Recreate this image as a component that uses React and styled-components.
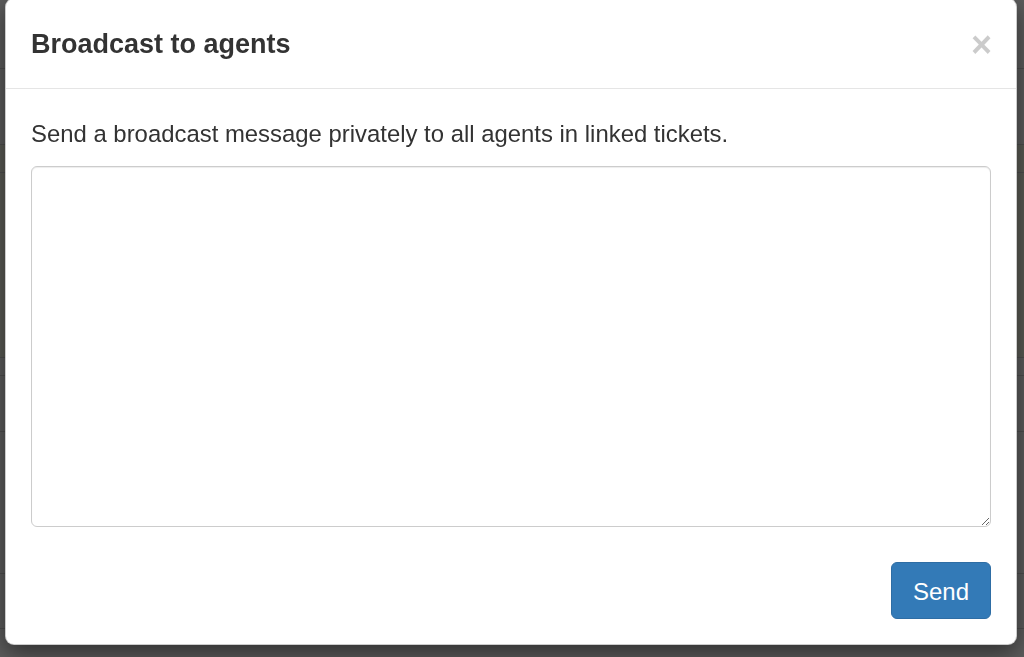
import React from "react";
import styled, { createGlobalStyle } from "styled-components";

const GlobalStyle = createGlobalStyle`
  html, body {
    margin: 0;
    padding: 0;
    height: 100%;
    overflow: hidden;
    background: #ffffff;
  }

  body {
    font-family: "Liberation Sans", Arial, sans-serif;
    color: #333333;
  }

  * {
    box-sizing: border-box;
  }
`;

const Page = styled.div`
  display: flex;
  flex-direction: column;
  height: 100vh;
`;

const Row = styled.div`
  height: ${(p) => p.h}px;
  flex-shrink: 0;
  border-bottom: 1px solid #d8d8d8;
  background: ${(p) => (p.tint ? "#f9fbe9" : "#ffffff")};
`;

const Backdrop = styled.div`
  position: fixed;
  inset: 0;
  background: rgba(0, 0, 0, 0.64);
`;

const Modal = styled.div`
  position: fixed;
  top: -2px;
  left: 5px;
  width: 1012px;
  display: flex;
  flex-direction: column;
  background: #ffffff;
  border: 1px solid rgba(0, 0, 0, 0.2);
  border-radius: 9px;
  box-shadow: 0 8px 25px rgba(0, 0, 0, 0.5);
`;

const Header = styled.div`
  display: flex;
  align-items: center;
  justify-content: space-between;
  height: 90px;
  padding: 2px 25px 0 25px;
  border-bottom: 1px solid #e5e5e5;
`;

const Title = styled.h4`
  margin: 0;
  font-size: 27px;
  font-weight: 700;
  line-height: 1.1;
  color: #333333;
`;

const Close = styled.button`
  padding: 0;
  margin: 0 -1px 0 0;
  border: 0;
  background: transparent;
  font-family: "Liberation Sans", Arial, sans-serif;
  font-size: 36px;
  font-weight: 700;
  line-height: 1;
  color: #000000;
  opacity: 0.2;
  cursor: pointer;
`;

const Body = styled.div`
  display: flex;
  flex-direction: column;
  gap: 15px;
  padding: 28px 25px 10px;
`;

const Lead = styled.p`
  margin: 0;
  font-size: 23.9px;
  line-height: 33.6px;
  color: #333333;
`;

const Message = styled.textarea`
  display: block;
  width: 100%;
  height: 361px;
  padding: 10px 20px;
  border: 1px solid #cccccc;
  border-radius: 6px;
  box-shadow: inset 0 1px 1px rgba(0, 0, 0, 0.075);
  font-family: inherit;
  font-size: 23.5px;
  color: #555555;
  resize: vertical;
  outline: none;
`;

const Footer = styled.div`
  display: flex;
  justify-content: flex-end;
  padding: 25px;
`;

const Button = styled.button`
  height: 57px;
  padding: 4px 21px 0;
  border: 1px solid #2e6da4;
  border-radius: 6px;
  background: #337ab7;
  color: #ffffff;
  font-family: inherit;
  font-size: 24px;
  line-height: 1;
  cursor: pointer;
`;

const rows = [
  { h: 69 },
  { h: 76 },
  { h: 28, tint: true },
  { h: 185, tint: true },
  { h: 18 },
  { h: 56 },
  { h: 142 },
  { h: 55 },
  { h: 60 },
];

export default function App() {
  return (
    <>
      <GlobalStyle />
      <Page>
        {rows.map((r, i) => (
          <Row key={i} h={r.h} tint={r.tint} />
        ))}
      </Page>
      <Backdrop />
      <Modal role="dialog">
        <Header>
          <Title>Broadcast to agents</Title>
          <Close aria-label="Close">×</Close>
        </Header>
        <Body>
          <Lead>Send a broadcast message privately to all agents in linked tickets.</Lead>
          <Message />
        </Body>
        <Footer>
          <Button>Send</Button>
        </Footer>
      </Modal>
    </>
  );
}
